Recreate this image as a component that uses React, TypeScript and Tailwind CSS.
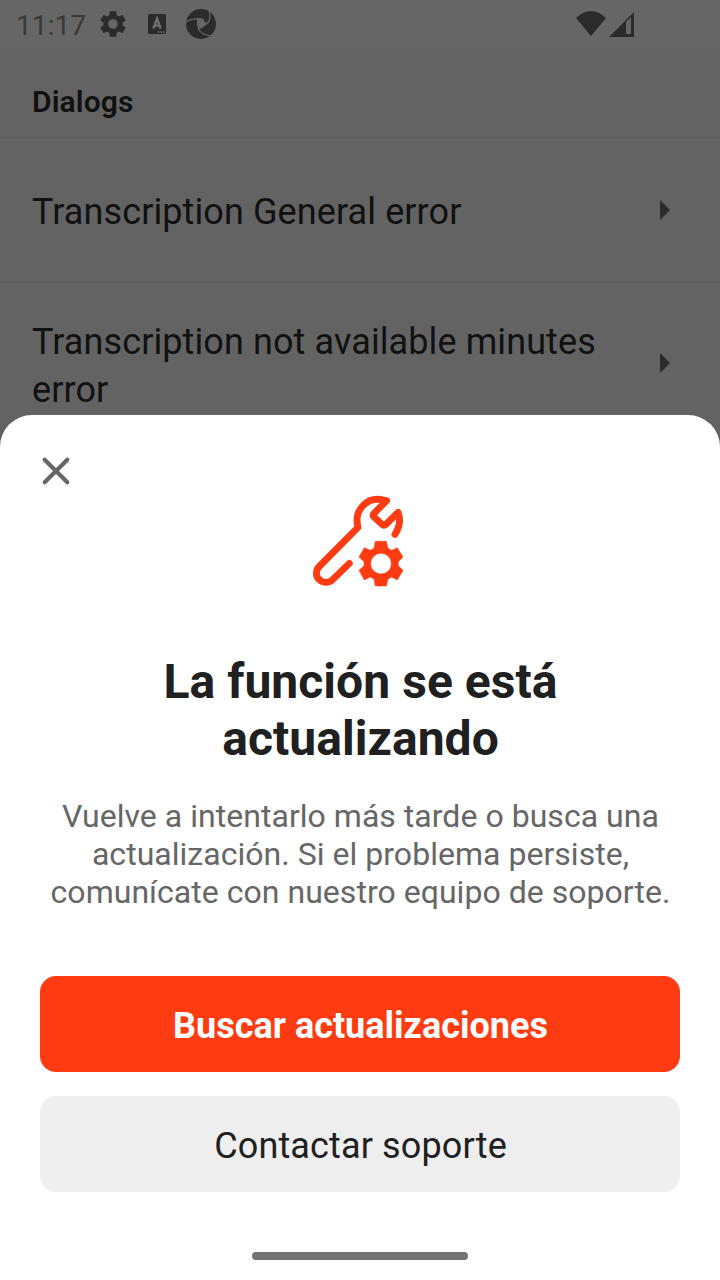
const GEAR =
  'M19.14 12.94c.04-.3.06-.61.06-.94s-.02-.64-.07-.94l2.03-1.58a.49.49 0 0 0 .12-.61l-1.92-3.32a.49.49 0 0 0-.59-.22l-2.39.96c-.5-.38-1.03-.7-1.62-.94l-.36-2.54A.48.48 0 0 0 13.92 2.4h-3.84a.48.48 0 0 0-.48.41l-.36 2.54c-.59.24-1.13.57-1.62.94l-2.39-.96a.48.48 0 0 0-.59.22L2.73 8.87a.48.48 0 0 0 .12.61l2.03 1.58c-.05.3-.08.62-.08.94s.02.64.07.94l-2.03 1.58a.49.49 0 0 0-.12.61l1.92 3.32c.12.22.37.29.59.22l2.39-.96c.5.38 1.03.7 1.62.94l.36 2.54c.05.24.25.41.49.41h3.84c.24 0 .44-.17.47-.41l.36-2.54c.59-.24 1.13-.56 1.62-.94l2.39.96c.22.08.47 0 .59-.22l1.92-3.32a.48.48 0 0 0-.12-.61zM12 15.6a3.6 3.6 0 1 1 0-7.2 3.6 3.6 0 0 1 0 7.2z';

function StatusBar() {
  return (
    <div className="flex h-12 items-center bg-[#666666] pl-4">
      <span className="w-[81px] pt-1 text-[28.2px] leading-[46px] text-[#393939]">11:17</span>
      <svg className="h-8 w-8 shrink-0" viewBox="0 0 24 24" fill="#2b2b2b">
        <path d={GEAR} />
      </svg>
      <svg className="ml-[19px] h-5 w-[18px] shrink-0" viewBox="0 0 54 60">
        <rect width="54" height="60" rx="5" fill="#2b2b2b" />
        <path d="M16 44L27 14L38 44M20 35H34" fill="none" stroke="#707070" strokeWidth="7" />
        <path d="M29 52h5v4h-5zM37 52h5v4h-5zM45 52h5v4h-5z" fill="#707070" />
      </svg>
      <svg className="ml-5 h-[30px] w-[30px] shrink-0" viewBox="0 0 90 90">
        <circle cx="45" cy="45" r="45" fill="#2b2b2b" />
        <path d="M34 28Q50 29 62 44Q54 57 37 61Q30 44 34 28Z" fill="#666666" />
        <path d="M0 38Q26 24 54 32M68 2Q78 28 62 46M36 58Q46 78 74 81" fill="none" stroke="#666666" strokeWidth="3.5" />
      </svg>
      <svg className="ml-[360px] h-[26px] w-[59px] shrink-0" viewBox="0 0 59 26" fill="#2b2b2b">
        <path d="M0 7Q15-7 30 7L15 25Z" />
        <path fillRule="evenodd" d="M33 26L58 1V26ZM50 11V23H55V6Z" />
      </svg>
    </div>
  );
}

function Row({ label, className, arrowClass }: { label: string; className: string; arrowClass: string }) {
  return (
    <div className={`flex items-center border-t border-[#5b5b5b] pl-8 pr-[50px] ${className}`}>
      <span className="w-[600px] text-[36px] leading-[48px] tracking-[0.1px] text-[#111111]">{label}</span>
      <svg className={`ml-auto h-5 w-2.5 shrink-0 ${arrowClass}`} viewBox="0 0 10 20" fill="#2b2b2b">
        <path d="M0 0L10 10L0 20Z" />
      </svg>
    </div>
  );
}

function MaintenanceIcon() {
  return (
    <svg className="h-[110px] w-[120px]" viewBox="0 0 360 330" fill="none">
      <path
        d="M285 148C298 128 303 105 294 82L259 117Q252 124 245 117L222 96Q216 91 222 85L260 47C230 38 205 43 188 63C172 80 168 104 174 127L59 243C46 256 46 274 58 284C69 295 87 295 98 284L148 235"
        stroke="#ff3b12"
        strokeWidth="20.5"
        strokeLinecap="round"
        strokeLinejoin="round"
      />
      <path
        fillRule="evenodd"
        fill="#ff3b12"
        stroke="#ff3b12"
        strokeWidth="1.5"
        strokeLinejoin="round"
        d="M226 169H259L264 190L275 196L292 188L309 216L295 230V242L309 256L292 285L275 276L264 283L259 303H226L222 283L211 276L193 285L177 256L192 242V230L177 216L193 188L211 196L222 190ZM243 205A31 31 0 1 0 243 267A31 31 0 1 0 243 205Z"
      />
    </svg>
  );
}

export default function App() {
  return (
    <div className="flex h-[1280px] w-[720px] flex-col overflow-hidden bg-[#636363] font-['Roboto',sans-serif]">
      <StatusBar />
      <header className="flex h-[89px] shrink-0 items-center pl-8 pt-[18px]">
        <h2 className="text-[30px] font-semibold leading-9 tracking-[0.1px] text-[#111111]">Dialogs</h2>
      </header>
      <Row label="Transcription General error" className="h-[145px] shrink-0 pt-[3px]" arrowClass="mb-[3px]" />
      <Row
        label="Transcription not available minutes error"
        className="h-[163px] shrink-0 -mb-[30px] pt-[4px]"
        arrowClass="mb-[7px]"
      />
      <section className="relative flex flex-1 flex-col items-center rounded-t-[32px] bg-white px-10">
        <button aria-label="Cerrar" className="absolute left-10 top-10">
          <svg className="h-8 w-8" viewBox="0 0 32 32" fill="none" stroke="#666666" strokeWidth="4.2" strokeLinecap="round">
            <path d="M4.7 4.7L27.3 27.3M27.3 4.7L4.7 27.3" />
          </svg>
        </button>
        <div className="mt-[70px]">
          <MaintenanceIcon />
        </div>
        <h1 className="mt-[58px] w-[480px] pl-px text-center text-[48px] font-bold leading-[57px] tracking-[0.05px] text-[#202020]">
          La función se está actualizando
        </h1>
        <p className="mt-[30px] whitespace-nowrap pl-px text-center text-[32px] leading-[38px] tracking-[0.03px] text-[#666666]">
          Vuelve a intentarlo más tarde o busca una
          <br />
          actualización. Si el problema persiste,
          <br />
          comunícate con nuestro equipo de soporte.
        </p>
        <button className="mt-[65px] h-24 w-full rounded-2xl bg-[#ff3b12] pl-px pt-1 text-[36px] font-bold text-white">
          Buscar actualizaciones
        </button>
        <button className="mt-6 h-24 w-full rounded-2xl bg-[#eeeeee] pl-px pt-1 text-[36px] tracking-[0.14px] text-[#202020]">
          Contactar soporte
        </button>
        <div className="mt-[60px] h-2 w-[216px] rounded-full bg-[#727272]" />
      </section>
    </div>
  );
}
